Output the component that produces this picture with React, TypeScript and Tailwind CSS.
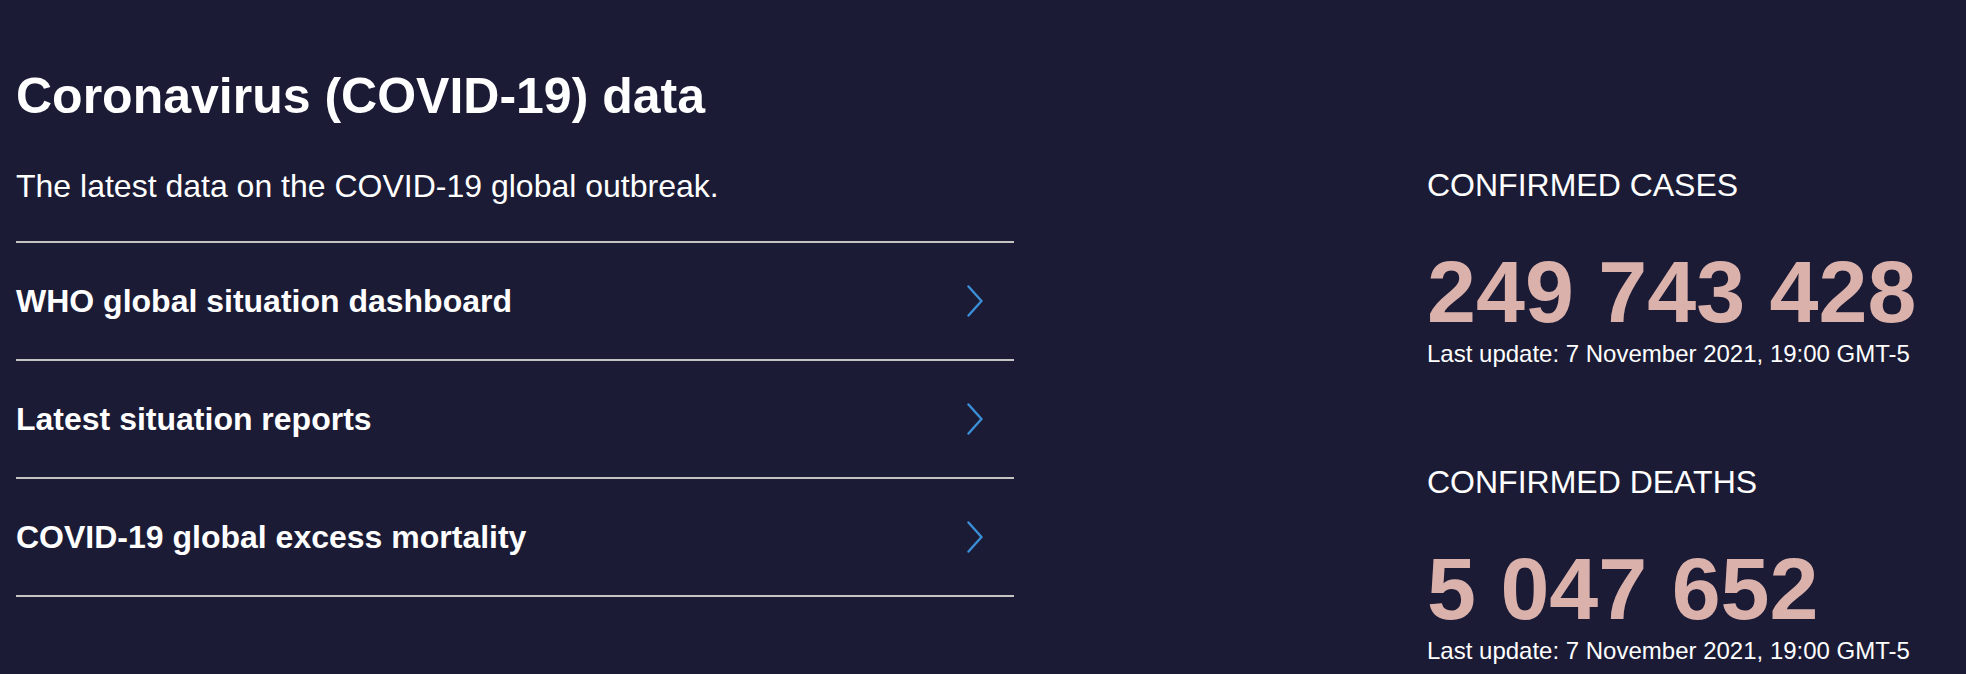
import React from "react";

const links = [
  "WHO global situation dashboard",
  "Latest situation reports",
  "COVID-19 global excess mortality",
];

function Chevron() {
  return (
    <svg width="16" height="32" viewBox="0 0 16 32" fill="none" aria-hidden="true">
      <polyline
        points="1.5,1.5 14.5,16 1.5,30.5"
        stroke="#3a8fd6"
        strokeWidth="2.4"
        strokeLinecap="round"
        strokeLinejoin="round"
      />
    </svg>
  );
}

function Stat({ label, value }: { label: string; value: string }) {
  return (
    <div className="flex flex-col">
      <div className="text-[32px] leading-[38px] text-white">{label}</div>
      <div className="mt-[44px] text-[88px] leading-[88px] font-bold text-[#dbb1ab]">{value}</div>
      <div className="mt-[4px] text-[24px] leading-[28px] text-white">
        Last update: 7 November 2021, 19:00 GMT-5
      </div>
    </div>
  );
}

export default function App() {
  return (
    <div
      className="w-[1966px] h-[674px] overflow-hidden bg-[#1b1b36] flex"
      style={{ fontFamily: '"Liberation Sans", Arial, sans-serif' }}
    >
      <div className="w-[1014px] pl-[16px] flex flex-col">
        <h1 className="mt-[66px] text-[50px] leading-[60px] font-bold text-white">
          Coronavirus (COVID-19) data
        </h1>
        <p className="mt-[41px] text-[32px] leading-[38px] text-white">
          The latest data on the COVID-19 global outbreak.
        </p>
        <ul className="mt-[36px] border-b-2 border-[#c4c4c4]">
          {links.map((l) => (
            <li
              key={l}
              className="h-[118px] border-t-2 border-[#c4c4c4] flex items-center justify-between pr-[31px]"
            >
              <span className="text-[32px] leading-[38px] font-bold text-white">{l}</span>
              <Chevron />
            </li>
          ))}
        </ul>
      </div>
      <div className="ml-[413px] mt-[166px] flex flex-col gap-[95px]">
        <Stat label="CONFIRMED CASES" value="249 743 428" />
        <Stat label="CONFIRMED DEATHS" value="5 047 652" />
      </div>
    </div>
  );
}
